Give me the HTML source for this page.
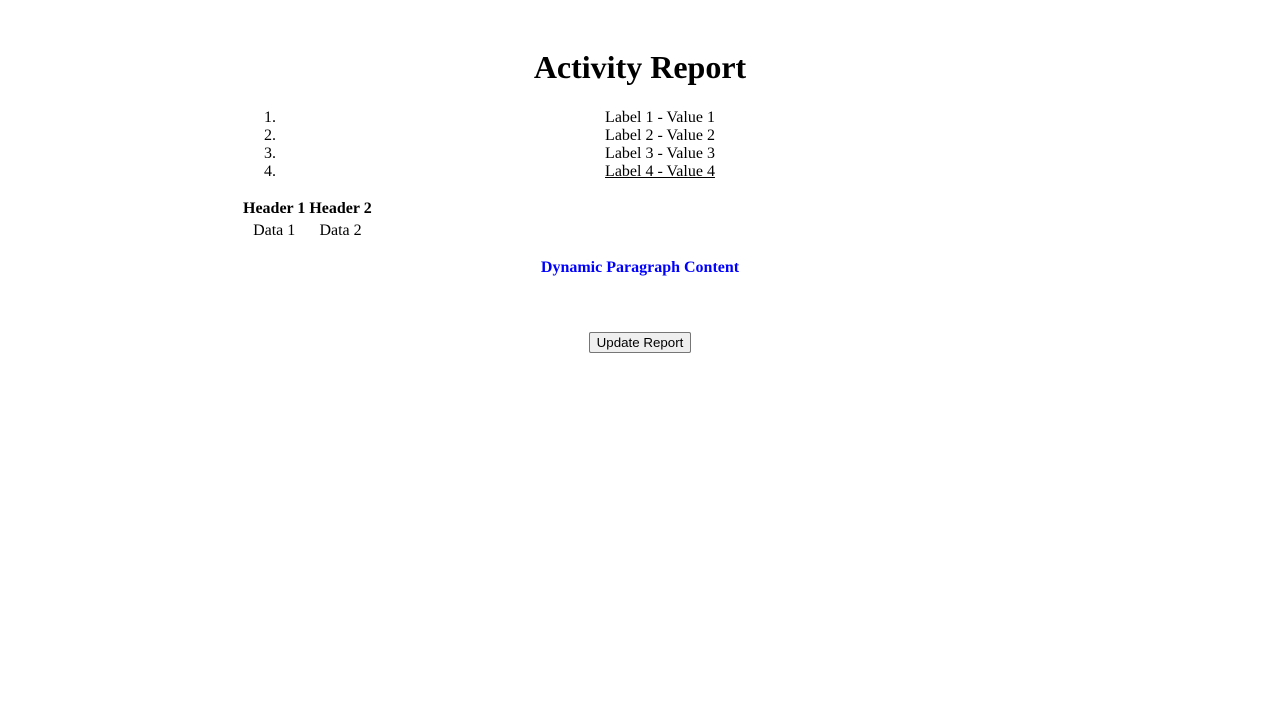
<!DOCTYPE html>
<html>
<head>
<meta charset="utf-8">
<style>
  body { margin: 8px; font-family: "Liberation Serif", serif; font-size: 16px; background: #fff; color: #000; }
  .wrap { width: 800px; margin: 0 auto; padding-top: 20px; }
  h1 { text-align: center; font-size: 32px; margin: 21.44px 0; line-height: 37px; }
  ol { margin: 16px 0; padding-left: 40px; padding-top: 1px; }
  li { text-align: center; line-height: 18px; }
  li u { text-decoration: underline; }
  table { border-spacing: 2px; }
  th, td { padding: 1px; line-height: 18px; }
  p { text-align: center; color: #0000ff; font-weight: bold; margin: 16px 0 0 0; line-height: 18px; }
  .btn { text-align: center; padding-top: 55px; }
  button { font-family: "Liberation Sans", sans-serif; font-size: 13.33px; height: 21px; width: 102px; padding: 0; background: #efefef; border: 1px solid #767676; border-radius: 2px; color: #000; }
</style>
</head>
<body>
<div class="wrap">
  <h1>Activity Report</h1>
  <ol>
    <li>Label 1 - Value 1</li>
    <li>Label 2 - Value 2</li>
    <li>Label 3 - Value 3</li>
    <li><u>Label 4 - Value 4</u></li>
  </ol>
  <table>
    <tr><th>Header 1</th><th>Header 2</th></tr>
    <tr><td style="text-align:center">Data 1</td><td style="text-align:center">Data 2</td></tr>
  </table>
  <p>Dynamic Paragraph Content</p>
  <div class="btn"><button>Update Report</button></div>
</div>
</body>
</html>
